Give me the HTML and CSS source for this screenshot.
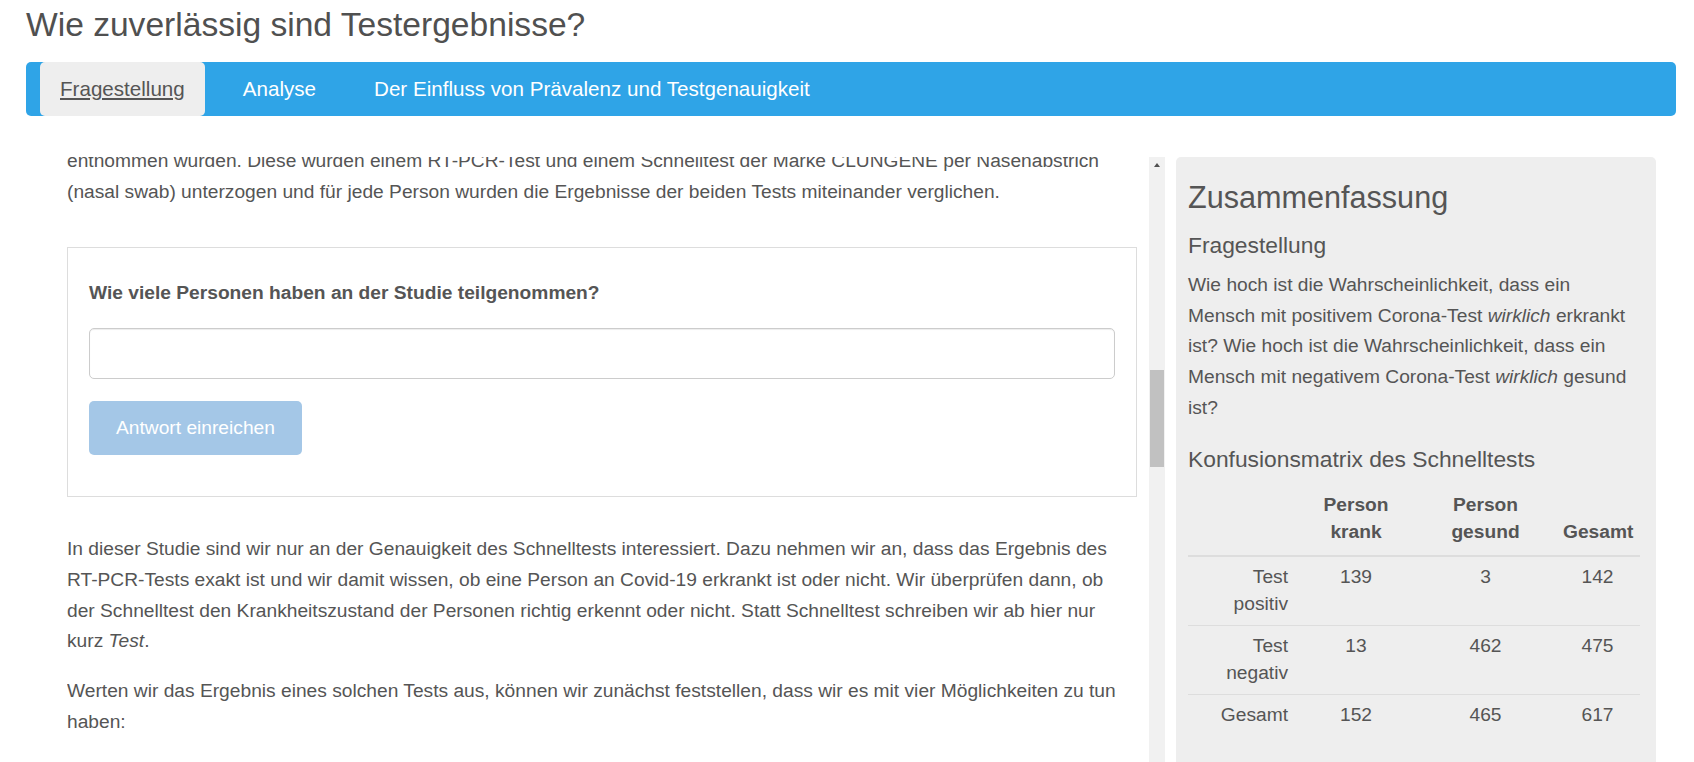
FILE: index.html
```html
<!DOCTYPE html>
<html lang="de">
<head>
<meta charset="utf-8">
<title>Wie zuverlässig sind Testergebnisse?</title>
<link rel="stylesheet" href="styles.css">
</head>
<body>
<div class="page">
  <h1 class="page-title">Wie zuverlässig sind Testergebnisse?</h1>
  <nav class="navbar">
    <ul class="nav-tabs">
      <li class="nav-item active"><a href="#">Fragestellung</a></li>
      <li class="nav-item"><a href="#">Analyse</a></li>
      <li class="nav-item"><a href="#">Der Einfluss von Prävalenz und Testgenauigkeit</a></li>
    </ul>
  </nav>
  <div class="content-row">
    <div class="main-col">
      <div class="scroll-view">
        <div class="scroll-content">
          <p class="scrolled-first">entnommen wurden. Diese wurden einem RT-PCR-Test und einem Schnelltest der Marke CLUNGENE per Nasenabstrich (nasal swab) unterzogen und für jede Person wurden die Ergebnisse der beiden Tests miteinander verglichen.</p>
          <div class="question-box">
            <label class="question-label" for="answer">Wie viele Personen haben an der Studie teilgenommen?</label>
            <input id="answer" class="answer-input" type="text">
            <button class="submit-btn" type="button" disabled>Antwort einreichen</button>
          </div>
          <p>In dieser Studie sind wir nur an der Genauigkeit des Schnelltests interessiert. Dazu nehmen wir an, dass das Ergebnis des RT-PCR-Tests exakt ist und wir damit wissen, ob eine Person an Covid-19 erkrankt ist oder nicht. Wir überprüfen dann, ob der Schnelltest den Krankheitszustand der Personen richtig erkennt oder nicht. Statt Schnelltest schreiben wir ab hier nur kurz <em>Test</em>.</p>
          <p>Werten wir das Ergebnis eines solchen Tests aus, können wir zunächst feststellen, dass wir es mit vier Möglichkeiten zu tun haben:</p>
        </div>
      </div>
      <div class="scrollbar">
        <div class="scroll-arrow"></div>
        <div class="scroll-thumb"></div>
      </div>
    </div>
    <aside class="summary">
      <h2 class="summary-title">Zusammenfassung</h2>
      <h4 class="summary-sub">Fragestellung</h4>
      <p class="summary-text">Wie hoch ist die Wahrscheinlichkeit, dass ein Mensch mit positivem Corona-Test <em>wirklich</em> erkrankt ist? Wie hoch ist die Wahrscheinlichkeit, dass ein Mensch mit negativem Corona-Test <em>wirklich</em> gesund ist?</p>
      <h4 class="summary-sub matrix-title">Konfusionsmatrix des Schnelltests</h4>
      <table class="matrix">
        <colgroup>
          <col class="c-label"><col class="c-krank"><col class="c-gesund"><col class="c-total">
        </colgroup>
        <thead>
          <tr><th></th><th>Person<br>krank</th><th>Person<br>gesund</th><th>Gesamt</th></tr>
        </thead>
        <tbody>
          <tr><td class="row-label">Test<br>positiv</td><td>139</td><td>3</td><td>142</td></tr>
          <tr><td class="row-label">Test<br>negativ</td><td>13</td><td>462</td><td>475</td></tr>
          <tr><td class="row-label">Gesamt</td><td>152</td><td>465</td><td>617</td></tr>
        </tbody>
      </table>
    </aside>
  </div>
</div>
</body>
</html>
```

FILE: styles.css
```css
html, body {
  margin: 0;
  padding: 0;
  overflow: hidden;
  background: #ffffff;
}

body {
  font-family: "Liberation Sans", Arial, sans-serif;
  color: #555555;
  font-size: 19.2px;
  line-height: 30.7px;
}

.page {
  padding: 0 18px 0 26px;
}

.page-title {
  margin: 7px 0 19px 0;
  font-size: 33.6px;
  line-height: 36px;
  font-weight: 400;
  color: #505050;
}

/* navbar */
.navbar {
  background: #2fa4e7;
  border-radius: 5px;
  height: 54px;
}

.nav-tabs {
  list-style: none;
  margin: 0;
  padding: 0 0 0 14px;
  display: flex;
  gap: 18px;
  height: 100%;
}

.nav-item a {
  display: block;
  padding: 0 20px;
  height: 54px;
  line-height: 54px;
  font-size: 20.6px;
  color: #ffffff;
  text-decoration: none;
}

.nav-item.active a {
  background: #eeeeee;
  color: #555555;
  text-decoration: underline;
  border-radius: 5px;
}

/* content */
.content-row {
  display: flex;
  margin-top: 41px;
  height: 640px;
}

.main-col {
  width: 1139px;
  display: flex;
  padding-left: 41px;
  box-sizing: border-box;
}

.scroll-view {
  flex: 1;
  overflow: hidden;
}

.scroll-content {
  padding-right: 12px;
}

.scroll-content p {
  margin: 0 0 19px 0;
  padding-right: 4px;
}

.scroll-content p.scrolled-first {
  margin-top: -11px;
}

.question-box {
  border: 1px solid #dddddd;
  padding: 30px 21px 21px 21px;
  margin: 40px 0 37px 0;
}

.question-label {
  display: block;
  font-weight: 700;
  margin-bottom: 19px;
}

.answer-input {
  display: block;
  box-sizing: border-box;
  width: 100%;
  height: 51px;
  border: 1px solid #cccccc;
  border-radius: 5px;
  box-shadow: inset 0 1px 1px rgba(0, 0, 0, 0.075);
  font: inherit;
  margin: 0 0 22px 0;
  background: #ffffff;
}

.submit-btn {
  display: block;
  height: 54px;
  padding: 0 27px;
  border: none;
  border-radius: 5px;
  background: #a4c7e7;
  color: #ffffff;
  font-family: inherit;
  font-size: 19.2px;
  margin-bottom: 20px;
}

/* fake scrollbar of the scrolled panel */
.scrollbar {
  width: 16px;
  background: #f1f1f1;
  display: flex;
  flex-direction: column;
  align-items: center;
}

.scroll-arrow {
  width: 0;
  height: 0;
  margin-top: 6px;
  border-left: 3.5px solid transparent;
  border-right: 3.5px solid transparent;
  border-bottom: 4px solid #505050;
}

.scroll-thumb {
  width: 14px;
  height: 97px;
  margin-top: 203px;
  background: #c1c1c1;
}

/* summary panel */
.summary {
  margin-left: 11px;
  width: 480px;
  background: #eeeeee;
  border-radius: 5px;
  padding: 0 18px 0 12px;
  box-sizing: border-box;
}

.summary-title {
  margin: 24px 0 0 0;
  font-size: 30.6px;
  line-height: 33px;
  font-weight: 400;
}

.summary-sub {
  margin: 19px 0 12px 0;
  font-size: 22.8px;
  line-height: 25px;
  font-weight: 400;
}

.summary-text {
  margin: 0;
}

.matrix-title {
  margin-top: 23px;
  margin-bottom: 13px;
}

.matrix {
  width: 100%;
  border-collapse: collapse;
  table-layout: fixed;
  line-height: 27px;
}

.c-label { width: 108px; }
.c-krank { width: 120px; }
.c-gesund { width: 139px; }
.c-total { width: 85px; }

.matrix th {
  font-weight: 700;
  text-align: center;
  vertical-align: bottom;
  padding: 6px 8px 10px 8px;
  border-bottom: 2px solid #dddddd;
}

.matrix td {
  text-align: center;
  vertical-align: top;
  padding: 6px 8px 8px 8px;
  border-top: 1px solid #dddddd;
}

.matrix tbody tr:first-child td {
  border-top: none;
}

.matrix td.row-label {
  text-align: right;
}
```
